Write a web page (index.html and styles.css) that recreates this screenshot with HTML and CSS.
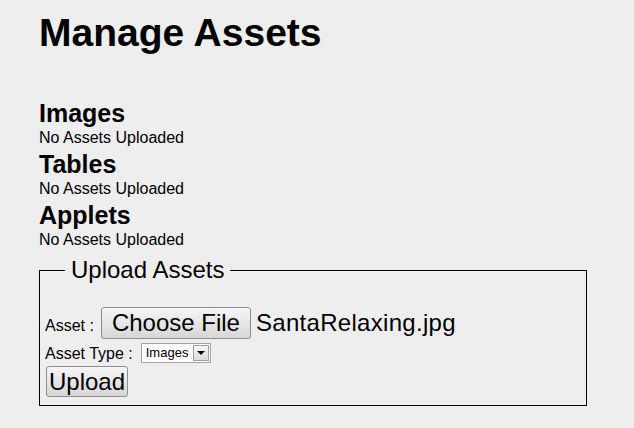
FILE: index.html
```html
<!DOCTYPE html>
<html lang="en">
<head>
<meta charset="utf-8">
<title>Manage Assets</title>
<link rel="stylesheet" href="styles.css">
</head>
<body>
<div class="page">
  <h1 class="title">Manage Assets</h1>

  <div class="section">
    <h2 class="section-title">Images</h2>
    <p class="section-empty">No Assets Uploaded</p>
  </div>
  <div class="section">
    <h2 class="section-title">Tables</h2>
    <p class="section-empty">No Assets Uploaded</p>
  </div>
  <div class="section">
    <h2 class="section-title">Applets</h2>
    <p class="section-empty">No Assets Uploaded</p>
  </div>

  <fieldset class="upload">
    <legend class="upload-legend">Upload Assets</legend>
    <div class="row row-file">
      <span class="label">Asset :</span>
      <button type="button" class="btn btn-choose">Choose File</button>
      <span class="file-name">SantaRelaxing.jpg</span>
    </div>
    <div class="row row-type">
      <span class="label">Asset Type :</span>
      <span class="select">
        <span class="select-value">Images</span>
        <span class="select-arrow"><span class="triangle"></span></span>
      </span>
    </div>
    <div class="row row-submit">
      <button type="button" class="btn btn-upload">Upload</button>
    </div>
  </fieldset>
</div>
</body>
</html>
```

FILE: styles.css
```css
html, body {
  margin: 0;
  padding: 0;
  background: #eeeeee;
}

body {
  font-family: "Liberation Sans", Arial, sans-serif;
  color: #000;
}

.page {
  padding: 10px 0 0 39px;
  width: 548px;
}

.title {
  font-size: 39px;
  font-weight: bold;
  line-height: 46px;
  margin: 0 0 43px;
}

.section-title {
  font-size: 25px;
  font-weight: bold;
  line-height: 29px;
  margin: 0;
}

.section-empty {
  font-size: 16px;
  line-height: 19px;
  margin: 0 0 3px;
}

.upload {
  box-sizing: border-box;
  width: 548px;
  margin: 7px 0 0;
  padding: 0 5px 8px 5px;
  border: 1px solid #000;
}

.upload-legend {
  font-size: 24px;
  line-height: 28px;
  padding: 0 6px;
  margin-left: 20px;
}

.row {
  display: flex;
}

.row-file {
  align-items: baseline;
  margin-top: 23px;
}

.row-type {
  align-items: center;
  margin-top: 4px;
  height: 20px;
}

.row-submit {
  margin-top: 3px;
}

.label {
  font-size: 16px;
  line-height: 19px;
}

.btn {
  font-family: "Liberation Sans", Arial, sans-serif;
  font-size: 24px;
  color: #000;
  border: 1px solid #8f8f8f;
  border-radius: 3px;
  background: linear-gradient(#f6f6f6, #e6e6e6 50%, #d6d6d6);
  margin: 0;
}

.btn-choose {
  line-height: 28px;
  padding: 1px 10px;
  margin-left: 7px;
}

.btn-upload {
  line-height: 27px;
  padding: 1px 2px;
  margin-left: 1px;
}

.file-name {
  font-size: 24px;
  line-height: 28px;
  margin-left: 5px;
  letter-spacing: 0.3px;
}

.select {
  box-sizing: border-box;
  display: flex;
  align-items: center;
  justify-content: space-between;
  width: 70px;
  height: 20px;
  margin-left: 8px;
  padding: 0 1px 0 4px;
  border: 1px solid #a5a5a5;
  background: #fff;
}

.select-value {
  font-size: 13px;
  line-height: 16px;
}

.select-arrow {
  box-sizing: border-box;
  width: 16px;
  height: 16px;
  border: 1px solid #a0a0a0;
  background: linear-gradient(#f4f4f4, #dcdcdc);
  display: flex;
  align-items: center;
  justify-content: center;
}

.triangle {
  width: 0;
  height: 0;
  border-left: 4px solid transparent;
  border-right: 4px solid transparent;
  border-top: 4px solid #000;
}
```
